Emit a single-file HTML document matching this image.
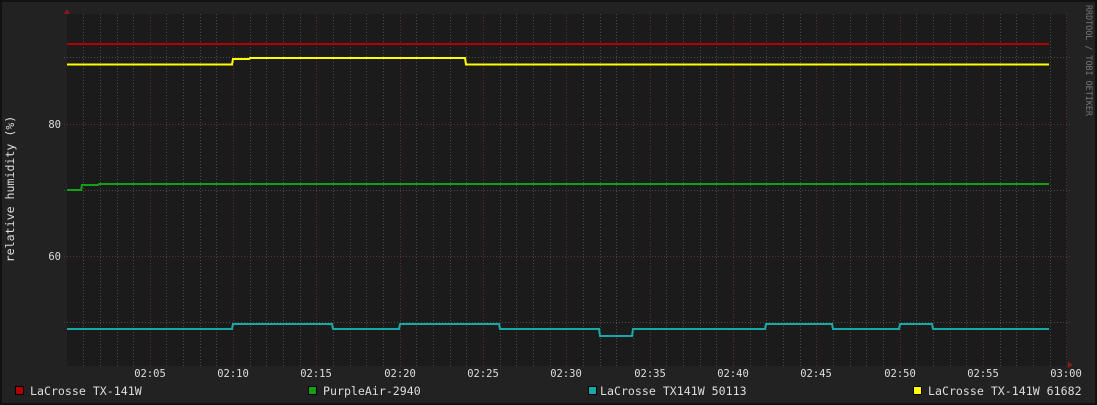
<!DOCTYPE html>
<html><head><style>html,body{margin:0;padding:0;background:#111}svg{display:block;font-family:"DejaVu Sans Mono","Liberation Mono",monospace}</style></head>
<body>
<svg width="1097" height="405" xmlns="http://www.w3.org/2000/svg" font-size="10">
<rect x="0" y="0" width="1097" height="405" fill="#111"/>
<rect x="2" y="2" width="1093" height="401" fill="#222"/>
<rect x="67" y="14" width="1000" height="352" fill="#1b1b1b"/>
<g stroke-width="1" stroke-dasharray="1,2">
<g stroke="#4a4a4a">
<line x1="83.5" y1="14" x2="83.5" y2="368"/><line x1="100.5" y1="14" x2="100.5" y2="368"/><line x1="117.5" y1="14" x2="117.5" y2="368"/><line x1="133.5" y1="14" x2="133.5" y2="368"/>
<line x1="166.5" y1="14" x2="166.5" y2="368"/><line x1="183.5" y1="14" x2="183.5" y2="368"/><line x1="200.5" y1="14" x2="200.5" y2="368"/><line x1="216.5" y1="14" x2="216.5" y2="368"/>
<line x1="250.5" y1="14" x2="250.5" y2="368"/><line x1="266.5" y1="14" x2="266.5" y2="368"/><line x1="283.5" y1="14" x2="283.5" y2="368"/><line x1="300.5" y1="14" x2="300.5" y2="368"/>
<line x1="333.5" y1="14" x2="333.5" y2="368"/><line x1="350.5" y1="14" x2="350.5" y2="368"/><line x1="366.5" y1="14" x2="366.5" y2="368"/><line x1="383.5" y1="14" x2="383.5" y2="368"/>
<line x1="416.5" y1="14" x2="416.5" y2="368"/><line x1="433.5" y1="14" x2="433.5" y2="368"/><line x1="450.5" y1="14" x2="450.5" y2="368"/><line x1="466.5" y1="14" x2="466.5" y2="368"/>
<line x1="500.5" y1="14" x2="500.5" y2="368"/><line x1="516.5" y1="14" x2="516.5" y2="368"/><line x1="533.5" y1="14" x2="533.5" y2="368"/><line x1="550.5" y1="14" x2="550.5" y2="368"/>
<line x1="583.5" y1="14" x2="583.5" y2="368"/><line x1="600.5" y1="14" x2="600.5" y2="368"/><line x1="616.5" y1="14" x2="616.5" y2="368"/><line x1="633.5" y1="14" x2="633.5" y2="368"/>
<line x1="666.5" y1="14" x2="666.5" y2="368"/><line x1="683.5" y1="14" x2="683.5" y2="368"/><line x1="700.5" y1="14" x2="700.5" y2="368"/><line x1="716.5" y1="14" x2="716.5" y2="368"/>
<line x1="750.5" y1="14" x2="750.5" y2="368"/><line x1="766.5" y1="14" x2="766.5" y2="368"/><line x1="783.5" y1="14" x2="783.5" y2="368"/><line x1="800.5" y1="14" x2="800.5" y2="368"/>
<line x1="833.5" y1="14" x2="833.5" y2="368"/><line x1="850.5" y1="14" x2="850.5" y2="368"/><line x1="866.5" y1="14" x2="866.5" y2="368"/><line x1="883.5" y1="14" x2="883.5" y2="368"/>
<line x1="916.5" y1="14" x2="916.5" y2="368"/><line x1="933.5" y1="14" x2="933.5" y2="368"/><line x1="950.5" y1="14" x2="950.5" y2="368"/><line x1="966.5" y1="14" x2="966.5" y2="368"/>
<line x1="1000.5" y1="14" x2="1000.5" y2="368"/><line x1="1016.5" y1="14" x2="1016.5" y2="368"/><line x1="1033.5" y1="14" x2="1033.5" y2="368"/><line x1="1050.5" y1="14" x2="1050.5" y2="368"/>
<line x1="64" y1="57.5" x2="1070" y2="57.5"/><line x1="64" y1="190.5" x2="1070" y2="190.5"/><line x1="64" y1="322.5" x2="1070" y2="322.5"/>
</g>
<g stroke="#603030">
<line x1="150.5" y1="14" x2="150.5" y2="368"/><line x1="233.5" y1="14" x2="233.5" y2="368"/><line x1="316.5" y1="14" x2="316.5" y2="368"/><line x1="400.5" y1="14" x2="400.5" y2="368"/>
<line x1="483.5" y1="14" x2="483.5" y2="368"/><line x1="566.5" y1="14" x2="566.5" y2="368"/><line x1="650.5" y1="14" x2="650.5" y2="368"/><line x1="733.5" y1="14" x2="733.5" y2="368"/>
<line x1="816.5" y1="14" x2="816.5" y2="368"/><line x1="900.5" y1="14" x2="900.5" y2="368"/><line x1="983.5" y1="14" x2="983.5" y2="368"/><line x1="1066.5" y1="14" x2="1066.5" y2="368"/>
<line x1="64" y1="124.5" x2="1070" y2="124.5"/><line x1="64" y1="256.5" x2="1070" y2="256.5"/>
</g>
</g>
<polygon points="64,14 67,9 70,14" fill="#8b1a1a"/>
<polygon points="1068,362 1073,365 1068,368" fill="#8b1a1a"/>
<g fill="none" stroke-width="2">
<polyline stroke="#b30000" points="67,44 1049,44"/>
<polyline stroke="#ffff00" points="67,64.5 232,64.5 233,59 249,59 250,58 465,58 466,64.5 1049,64.5"/>
<polyline stroke="#14a014" points="67,190 81,190 82,185 98,185 99,184 1049,184"/>
<polyline stroke="#19a8a8" points="67,329 232,329 233,324 332,324 333,329 399,329 400,324 499,324 500,329 599,329 600,336 632,336 633,329 765,329 766,324 832,324 833,329 899,329 900,324 932,324 933,329 1049,329"/>
</g>
<g fill="#ddd">
<g font-size="10.5">
<text x="61" y="128" text-anchor="end">80</text>
<text x="61" y="260" text-anchor="end">60</text>
<text x="150" y="377" text-anchor="middle">02:05</text>
<text x="233" y="377" text-anchor="middle">02:10</text>
<text x="316" y="377" text-anchor="middle">02:15</text>
<text x="400" y="377" text-anchor="middle">02:20</text>
<text x="483" y="377" text-anchor="middle">02:25</text>
<text x="566" y="377" text-anchor="middle">02:30</text>
<text x="650" y="377" text-anchor="middle">02:35</text>
<text x="733" y="377" text-anchor="middle">02:40</text>
<text x="816" y="377" text-anchor="middle">02:45</text>
<text x="900" y="377" text-anchor="middle">02:50</text>
<text x="983" y="377" text-anchor="middle">02:55</text>
<text x="1066" y="377" text-anchor="middle">03:00</text>
</g>
<g font-size="11.6">
<text transform="translate(14,189) rotate(-90)" text-anchor="middle">relative humidity (%)</text>
<text x="30" y="395">LaCrosse TX-141W</text>
<text x="323" y="395">PurpleAir-2940</text>
<text x="600" y="395">LaCrosse TX141W 50113</text>
<text x="928" y="395">LaCrosse TX-141W 61682</text>
</g>
</g>
<text transform="translate(1086,5) rotate(90)" fill="#777" font-size="8.4">RRDTOOL / TOBI OETIKER</text>
<g stroke="#000" stroke-width="1">
<rect x="15.5" y="386.5" width="8" height="8" fill="#b30000"/>
<rect x="308.5" y="386.5" width="8" height="8" fill="#14a014"/>
<rect x="588.5" y="386.5" width="8" height="8" fill="#19a8a8"/>
<rect x="913.5" y="386.5" width="8" height="8" fill="#ffff00"/>
</g>
</svg>
</body></html>
